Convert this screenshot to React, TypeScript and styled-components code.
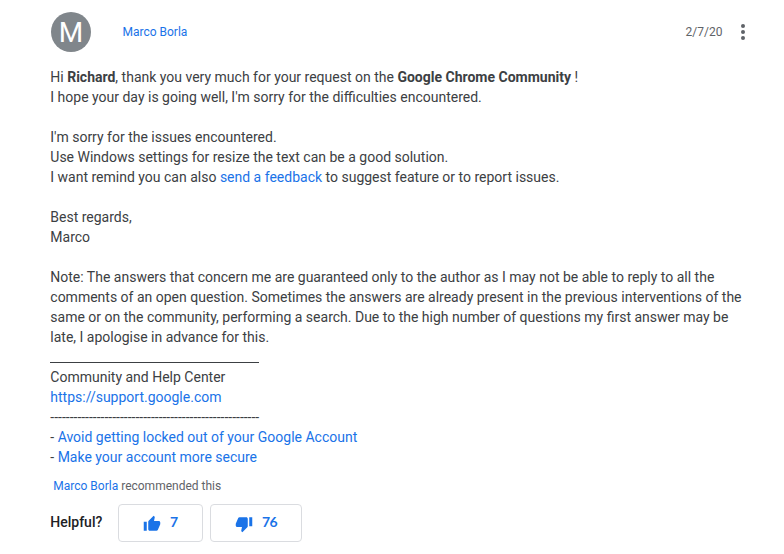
import React from "react";
import styled, { createGlobalStyle } from "styled-components";

const Global = createGlobalStyle`
  * { box-sizing: border-box; }
  body { margin: 0; background: #fff; color: #3c4043; font: 14px/20px Roboto, sans-serif; overflow: hidden; }
`;
const Page = styled.main`
  width: 784px;
  height: 554px;
  padding: 11px 32px 0 50.3px;
`;
const Header = styled.header`
  display: flex;
  align-items: center;
  height: 41px;
  font-size: 12px;
`;
const Avatar = styled.div`
  width: 40px;
  height: 40px;
  margin-left: 0.7px;
  border-radius: 50%;
  background: #80868b;
  color: #fff;
  font-size: 28px;
  line-height: 42px;
  text-align: center;
`;
const Link = styled.a`
  color: #1a73e8;
  text-decoration: none;
`;
const Author = styled(Link)`
  margin-left: 31.5px;
`;
const PostDate = styled.time`
  margin-left: auto;
  color: #5f6368;
`;
const MenuIcon = styled.svg`
  width: 24px;
  height: 24px;
  margin-left: 8.5px;
  margin-right: -3px;
  fill: #5f6368;
`;
const Body = styled.article`
  margin-top: 15px;
  white-space: pre;
`;
const Rule = styled.div`
  height: 20px;
  padding-top: 15px;
  &::before {
    content: "";
    display: block;
    width: 208.5px;
    height: 1px;
    background: #3c4043;
  }
`;
const Recommended = styled.p`
  margin: 9px 0 0 3px;
  font-size: 12px;
  color: #5f6368;
`;
const Votes = styled.div`
  display: flex;
  align-items: center;
  height: 38px;
  margin-top: 8px;
`;
const Label = styled.span`
  width: 67.7px;
  margin-top: -2px;
  color: #202124;
  font-weight: 500;
`;
const VoteButton = styled.button<{ $width: number }>`
  display: flex;
  align-items: center;
  gap: 9px;
  width: ${(p) => p.$width}px;
  height: 38px;
  margin-right: 7px;
  padding: 0 0 0 24px;
  border: 1px solid #dadce0;
  border-radius: 4px;
  background: #fff;
  color: #1a73e8;
`;
const Count = styled.span`
  margin-top: -3px;
  font: 700 14px/20px Lato, sans-serif;
  letter-spacing: -0.6px;
`;
const Thumb = styled.svg`
  width: 18px;
  height: 18px;
  margin-top: 2px;
  fill: #1a73e8;
`;

export default function App() {
  return (
    <>
      <Global />
      <Page>
        <Header>
          <Avatar>M</Avatar>
          <Author>Marco Borla</Author>
          <PostDate>2/7/20</PostDate>
          <MenuIcon viewBox="0 0 24 24">
            <circle cx="12" cy="6" r="2" /><circle cx="12" cy="12" r="2" /><circle cx="12" cy="18" r="2" />
          </MenuIcon>
        </Header>
        <Body>
          Hi <b>Richard</b>, thank you very much for your request on the <b>Google Chrome Community</b> !<br />
          I hope your day is going well, I'm sorry for the difficulties encountered.<br />
          <br />
          I'm sorry for the issues encountered.<br />
          Use Windows settings for resize the text can be a good solution.<br />
          I want remind you can also <Link>send a feedback</Link> to suggest feature or to report issues.<br />
          <br />
          Best regards,<br />
          Marco<br />
          <br />
          Note: The answers that concern me are guaranteed only to the author as I may not be able to reply to all the<br />
          comments of an open question. Sometimes the answers are already present in the previous interventions of the<br />
          same or on the community, performing a search. Due to the high number of questions my first answer may be<br />
          late, I apologise in advance for this.
          <Rule />
          Community and Help Center<br />
          <Link>https://support.google.com</Link><br />
          {"-".repeat(54)}<br />
          - <Link>Avoid getting locked out of your Google Account</Link><br />
          - <Link>Make your account more secure</Link>
        </Body>
        <Recommended><Link>Marco Borla</Link> recommended this</Recommended>
        <Votes>
          <Label>Helpful?</Label>
          <VoteButton $width={85}>
            <Thumb viewBox="0 0 24 24"><path d="M1 21h4V9H1v12zm22-11c0-1.1-.9-2-2-2h-6.31l.95-4.57.03-.32c0-.41-.17-.79-.44-1.06L14.17 1 7.59 7.59C7.22 7.95 7 8.45 7 9v10c0 1.1.9 2 2 2h9c.83 0 1.54-.5 1.84-1.22l3.02-7.05c.09-.23.14-.47.14-.73v-2z" /></Thumb>
            <Count>7</Count>
          </VoteButton>
          <VoteButton $width={92}>
            <Thumb viewBox="0 0 24 24"><path d="M15 3H6c-.83 0-1.54.5-1.84 1.22l-3.02 7.05c-.09.23-.14.47-.14.73v2c0 1.1.9 2 2 2h6.31l-.95 4.57-.03.32c0 .41.17.79.44 1.06L9.83 23l6.59-6.59c.36-.36.58-.86.58-1.41V5c0-1.1-.9-2-2-2zm4 0v12h4V3h-4z" /></Thumb>
            <Count>76</Count>
          </VoteButton>
        </Votes>
      </Page>
    </>
  );
}
